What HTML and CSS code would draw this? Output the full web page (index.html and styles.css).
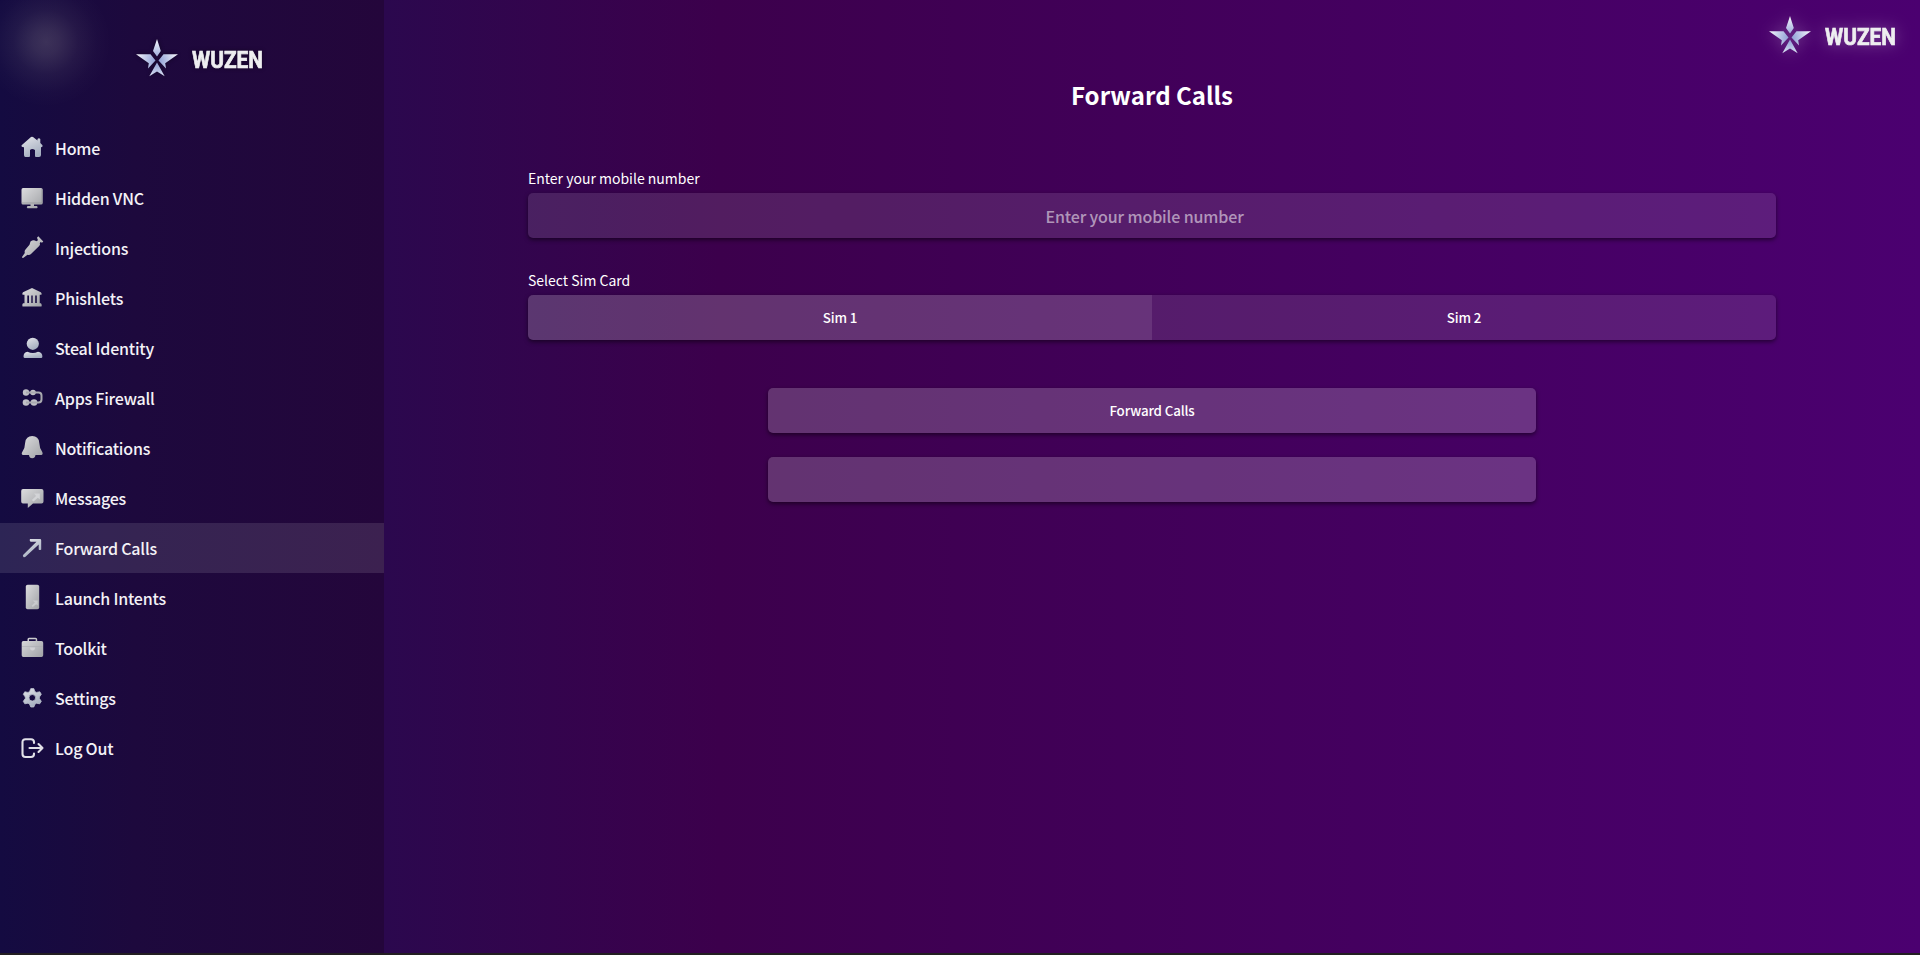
FILE: index.html
```
<!DOCTYPE html>
<html lang="en">
<head>
<meta charset="utf-8">
<title>Wuzen</title>
<link rel="stylesheet" href="styles.css">
</head>
<body>
<svg class="defs" width="0" height="0" aria-hidden="true">
  <defs>
    <linearGradient id="metal" x1="0" y1="0" x2="1" y2="1"><stop offset="0" stop-color="#dcdcde"/><stop offset="1" stop-color="#a0a2a6"/></linearGradient>
    <linearGradient id="cool" x1="0" y1="0" x2=".5" y2="1"><stop offset="0" stop-color="#e4e5ea"/><stop offset="1" stop-color="#a5afc0"/></linearGradient>
    <radialGradient id="star" gradientUnits="userSpaceOnUse" cx="21" cy="22" r="21"><stop offset="0" stop-color="#8999d2"/><stop offset=".45" stop-color="#b6c1e5"/><stop offset="1" stop-color="#f4f5fb"/></radialGradient>
    <symbol id="logo" viewBox="0 0 128 38">
      <path fill="url(#star)" d="M21 0 24.8 12 21 17.5 17 12ZM0 15.2H14.5L19.5 21.5 12 29.5 12.8 24.3ZM42 15.2H27.5L22.5 21.5 30 29.5 29.2 24.3ZM21 23.5 28.7 37.2 21 32.5 13.3 37.2Z"/>
      <text x="56" y="28.5" textLength="71" lengthAdjust="spacingAndGlyphs" class="wordmark">WUZEN</text>
    </symbol>
  </defs>
</svg>
<div class="app">
  <nav class="sidebar">
    <span class="glow"></span>
    <svg class="logo" viewBox="0 0 128 38"><use href="#logo"/></svg>
    <ul class="menu">
      <li class="item"><svg class="icon" viewBox="0 0 24 26"><path fill="url(#cool)" d="M11 2Q12 1.4 13 2L17.5 5.5V4Q19 2.7 20.3 4V8L22.5 10.2Q23 12.3 21 12.2V20Q21 22 19 22H16Q15 22 15 21V15Q12 13 10 15V21Q10 22 9 22H5.500Q4 22 4 20V12.200Q1 12.300 1.600 10.300Z"/></svg>Home</li>
      <li class="item"><svg class="icon" viewBox="0 0 24 26"><path fill="url(#metal)" d="M3 3H21Q22.700 3 22.700 4.700V18Q22.700 19.600 21 19.600H14V21H17Q18.400 22.200 17 23.200H7.500Q6 22.200 7.500 21H10.500V19.600H3Q1.500 19.600 1.500 18V4.700Q1.500 3 3 3Z"/><path fill="none" stroke="#8f9095" stroke-width=".7" d="M2 18H22V4"/></svg>Hidden VNC</li>
      <li class="item"><svg class="icon" viewBox="0 0 24 26"><path fill="url(#metal)" d="M17 2.700 18.300 1.300 23.300 6.500 22 7.800 20.600 6.900 19.700 8.200Q20.500 9.500 19.200 11L11 19Q9.500 20.300 7.500 19.700L3.500 22.800Q2.200 23.300 2 22L4.800 18Q4.200 16 5.500 14.500L9.500 9.800 10.500 6.500Q13 4.500 15 5.500L16.200 6.200 18 5.300Z"/></svg>Injections</li>
      <li class="item"><svg class="icon" viewBox="0 0 24 26"><path fill="url(#metal)" fill-rule="evenodd" d="M12 3 20.800 7.300Q22 8 21.500 9.700H19.700V18.300H21Q22.300 20 21.500 21.500H2.500Q1.800 19.500 3 18.300H4.500V9.700H2.500Q2 8 3 7.300ZM7.300 10.500V18H9V10.500ZM11.300 10.500V18H12.700V10.500ZM15.200 10.500V18H16.800V10.500Z"/></svg>Phishlets</li>
      <li class="item"><svg class="icon" viewBox="0 0 24 26"><circle cx="12.800" cy="8.800" r="6.100" fill="url(#cool)"/><path fill="url(#cool)" d="M7.500 16.800Q12.800 19.200 18 16.800Q22.400 17.500 22.400 21.500Q22.400 23 21 23H5Q3.500 23 3.500 21.500Q3.500 17.500 7.500 16.800Z"/></svg>Steal Identity</li>
      <li class="item"><svg class="icon" viewBox="0 0 24 26"><g fill="#c1c1c7"><circle cx="6" cy="7.500" r="3.200"/><circle cx="13" cy="7.500" r="2.800"/><circle cx="6" cy="17.500" r="3.300"/><circle cx="14" cy="17.500" r="3.300"/></g><path fill="none" stroke="#a9aab0" stroke-width="2" d="M6 7.500H18.500Q21.500 7.500 21.500 10.500V14.500Q21.500 17.500 18.500 17.500H6"/></svg>Apps Firewall</li>
      <li class="item"><svg class="icon" viewBox="0 0 24 26"><path fill="url(#metal)" d="M12.200 1Q18.600 1 19.200 7.500 19.500 13 22 16.500 23.500 19 21.500 20H15.500Q15 23.300 12.200 23.300T9 20H2.800Q.8 19 2.500 16.500 5 13 5.200 7.500 6 1 12.200 1Z"/></svg>Notifications</li>
      <li class="item"><svg class="icon" viewBox="0 0 24 26"><path fill="url(#metal)" d="M3 4H21.500Q23.500 4 23.500 6V16.500Q23.500 18.500 21.500 18.500H13L7.800 23V18.500H3Q1.200 18.500 1.200 16.500V6Q1.200 4 3 4Z"/><path fill="#d3d4d7" d="M14 8.500H19.800V14.500L17.800 12.800 13.500 16.500 11.800 15 16 11Z"/></svg>Messages</li>
      <li class="item active"><svg class="icon" viewBox="0 0 24 26"><path fill="url(#cool)" d="M10 4H20Q21.200 4 21.200 5.200V14.500Q19.700 15.700 18.700 14.500V9.500L5.500 21.800Q4.200 22.700 3.300 21.700T3.300 19.800L16.500 6.700H10.500Q9 5.200 10 4Z"/></svg>Forward Calls</li>
      <li class="item"><svg class="icon" viewBox="0 0 24 26"><rect x="5.800" y="-.2" width="13.400" height="24.500" rx="1.800" fill="url(#metal)"/><path fill="#c9cacd" d="M12.500 15.500H17.700V20.500L16.200 19.300 12.800 22 11.500 20.700 14.800 17.500Z"/></svg>Launch Intents</li>
      <li class="item"><svg class="icon" viewBox="0 0 24 26"><path fill="url(#metal)" fill-rule="evenodd" d="M7.500 6V4.200Q7.500 2.700 9 2.700H15.500Q17.200 2.700 17.200 4.200V6H21.500Q23.200 6 23.200 7.700V20.300Q23.200 22 21.500 22H3.300Q1.700 22 1.700 20.300V7.700Q1.700 6 3.300 6ZM9 6H15.700V4.200H9Z"/><path fill="none" stroke="#a9abb0" stroke-width=".5" d="M2 11.500H23"/><path fill="#d2d2d5" d="M10 12.500H15Q15 15.500 12.500 15.500T10 12.500Z"/></svg>Toolkit</li>
      <li class="item"><svg class="icon" viewBox="0 0 24 26"><path fill="url(#cool)" stroke="#bcc2ce" stroke-width=".8" stroke-linejoin="round" fill-rule="evenodd" d="M10.800 3.600H13.800L15 6.700 16.500 7.400 19.800 6.800 21.300 9.300 19.400 12V13.500L21.300 16.300 19.700 18.800 16.500 18.200 15 19 13.800 22H10.800L9.500 19 8 18.200 4.800 18.800 3.300 16.300 5.300 13.500V12L3.300 9.300 4.800 6.800 8 7.400 9.500 6.700ZM12.300 9.500A3.300 3.300 0 1 0 12.300 16.100 3.300 3.300 0 1 0 12.300 9.500Z"/></svg>Settings</li>
      <li class="item"><svg class="icon" viewBox="0 0 24 26"><path fill="none" stroke="#e2e1e8" stroke-width="2.100" stroke-linecap="round" stroke-linejoin="round" d="M14 8V7Q14 4.200 11 4.200H5.500Q2.500 4.200 2.500 7V19Q2.500 22 5.500 22H11Q14 22 14 19V18.500M9.500 13H22.500M18.500 9 22.500 13 18.500 17"/></svg>Log Out</li>
    </ul>
  </nav>
  <main class="main">
    <svg class="logo brand" viewBox="0 0 128 38"><use href="#logo"/></svg>
    <h1 class="title">Forward Calls</h1>
    <label class="label" for="mobile">Enter your mobile number</label>
    <input class="field" id="mobile" type="text" placeholder="Enter your mobile number">
    <div class="label">Select Sim Card</div>
    <div class="sims"><button class="sim selected">Sim 1</button><button class="sim">Sim 2</button></div>
    <div class="actions"><button class="action">Forward Calls</button><button class="action" aria-label="Status"></button></div>
  </main>
</div>
</body>
</html>
```
FILE: styles.css
```
* { box-sizing: border-box; }
body, button, input { font-family: "Noto Sans CJK SC", "Noto Sans", sans-serif; color: #fff; }
body { margin: 0; height: 955px; overflow: hidden; background: #231e22; }
.defs { position: absolute; }
.app { display: flex; height: 953px; background: linear-gradient(90deg, #1b0f57 0, #2b084e 384px, #3c004c 720px, #4b0070 100%); }
.sidebar { position: relative; width: 384px; flex: none; padding-top: 39px; display: flex; flex-direction: column; background: linear-gradient(90deg, #140b41, #1d093d 35%, #24063b); }
.glow { position: absolute; left: -19px; top: -23px; width: 130px; height: 130px; background: radial-gradient(closest-side, rgba(255,255,220,.16), rgba(255,255,220,.13) 20%, rgba(255,255,220,.055) 50%, rgba(255,255,220,.015) 78%, rgba(255,255,220,0)); }
.logo { width: 128px; height: 38px; margin-left: 136px; flex: none; filter: drop-shadow(0 0 2px rgba(0,0,0,.4)); }
.wordmark { font: 700 24px Roboto, sans-serif; fill: #eeeef0; stroke: #eeeef0; stroke-width: .7px; }
.menu { list-style: none; margin: 46px 0 0; padding: 0; }
.item { display: flex; align-items: center; height: 50px; padding-left: 20px; gap: 11px; font-size: 16px; letter-spacing: -.2px; font-weight: 500; line-height: 26px; color: #f4f2f7; }
.active { background: rgba(255,255,255,.11); }
.icon { width: 24px; height: 26px; flex: none; overflow: visible; }
.main { position: relative; flex: 1; padding: 75px 144px 0; display: flex; flex-direction: column; }
.brand { position: absolute; right: 23px; top: 16px; margin: 0; filter: drop-shadow(0 0 8px rgba(255,255,255,.3)); }
.title { margin: 0 0 52px; height: 40px; line-height: 40px; font-size: 24px; font-weight: 700; text-align: center; }
.label { height: 26px; line-height: 22px; font-size: 14px; font-weight: 400; }
.field, .sims, .action { height: 45px; border: 0; border-radius: 5px; box-shadow: 0 2px 4px rgba(0,0,0,.5); }
.field { width: 100%; padding: 1px 15px 0 0; margin-bottom: 31px; background: rgba(255,255,255,.115); text-align: center; font-size: 16px; font-weight: 500; letter-spacing: -.12px; outline: 0; }
.field::placeholder { color: rgba(255,255,255,.55); opacity: 1; }
.sims { display: flex; overflow: hidden; margin-bottom: 48px; }
.sim { flex: 1; border: 0; background: rgba(255,255,255,.11); }
.sim, .action { padding: 0; font-size: 13.333px; letter-spacing: -.15px; font-weight: 500; }
.selected { background: rgba(255,255,255,.2); }
.actions { display: flex; flex-direction: column; gap: 24px; align-items: center; }
.action { width: 768px; background: rgba(255,255,255,.2); }
```
